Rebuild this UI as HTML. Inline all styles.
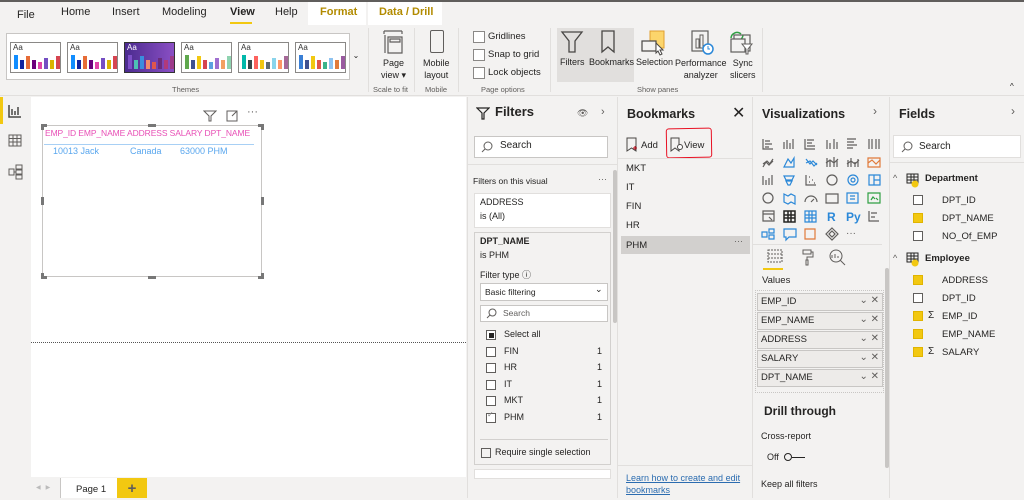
<!DOCTYPE html>
<html><head><meta charset="utf-8">
<style>
*{box-sizing:border-box;margin:0;padding:0}
body{width:1024px;height:498px;overflow:hidden;background:#f3f2f1;font-family:"Segoe UI","Liberation Sans",sans-serif;font-size:10px;color:#252423;position:relative}
.a{position:absolute}
.t{position:absolute;white-space:nowrap}
.cb{position:absolute;width:10px;height:10px;border:1px solid #605e5c;background:#fff}
.cby{position:absolute;width:10px;height:10px;background:#f2c811;border:1px solid #e0b400}
.th{position:absolute;top:42px;width:51px;height:31px;border:1px solid #8a8886;background:#fff}
.th span{position:absolute;left:2px;top:0;font-size:8px;color:#333}
.bars{position:absolute;left:3px;bottom:3px;display:flex;align-items:flex-end;gap:2px}
.bars i{display:block;width:4px}
.well{position:absolute;left:757px;width:126px;height:18px;background:#edebe9;border:1px solid #c8c6c4;font-size:9.5px;padding:2px 0 0 3px}
.well b{position:absolute;right:3px;top:1px;font-weight:normal;color:#605e5c;font-size:10px}
</style></head><body>

<div class="a" style="left:0;top:0;width:1024px;height:2px;background:#605e5c"></div>
<div class="a" style="left:308px;top:2px;width:58px;height:23px;background:#fff"></div>
<div class="a" style="left:368px;top:2px;width:74px;height:23px;background:#fff"></div>
<div class="t" style="left:17px;top:9px;font-size:11px">File</div>
<div class="t" style="left:61px;top:6px;font-size:11px">Home</div>
<div class="t" style="left:112px;top:6px;font-size:11px">Insert</div>
<div class="t" style="left:162px;top:6px;font-size:11px">Modeling</div>
<div class="t" style="left:230px;top:6px;font-size:11px;font-weight:bold">View</div>
<div class="a" style="left:230px;top:22px;width:22px;height:2px;background:#f2c811"></div>
<div class="t" style="left:275px;top:6px;font-size:11px">Help</div>
<div class="t" style="left:320px;top:6px;font-size:11px;color:#b28b00;font-weight:bold">Format</div>
<div class="t" style="left:379px;top:6px;font-size:11px;color:#b28b00;font-weight:bold">Data / Drill</div>

<div class="a" style="left:6px;top:33px;width:356px;height:47px;border:1px solid #c8c6c4;background:#fff"></div>
<div class="a" style="left:349px;top:33px;width:13px;height:47px;border-left:1px solid #c8c6c4;background:#f3f2f1;font-size:8px;text-align:center;padding-top:18px">⌄</div>
<div class="th" style="left:10px"><span>Aa</span><div class="bars"><i style="height:14px;background:#118dff"></i><i style="height:9px;background:#12239e"></i><i style="height:13px;background:#e66c37"></i><i style="height:9px;background:#6b007b"></i><i style="height:7px;background:#e044a7"></i><i style="height:11px;background:#744ec2"></i><i style="height:9px;background:#d9b300"></i><i style="height:13px;background:#d64550"></i></div></div>
<div class="th" style="left:67px"><span>Aa</span><div class="bars"><i style="height:14px;background:#118dff"></i><i style="height:9px;background:#12239e"></i><i style="height:13px;background:#e66c37"></i><i style="height:9px;background:#6b007b"></i><i style="height:7px;background:#e044a7"></i><i style="height:11px;background:#744ec2"></i><i style="height:9px;background:#d9b300"></i><i style="height:13px;background:#d64550"></i></div></div>
<div class="th" style="left:124px;background:linear-gradient(90deg,#4b2b8f,#8a4fc4);border-color:#333"><span style="color:#fff">Aa</span><div class="bars"><i style="height:14px;background:#7d4fc8"></i><i style="height:9px;background:#4ec1b5"></i><i style="height:13px;background:#3a8dde"></i><i style="height:9px;background:#f08a6c"></i><i style="height:7px;background:#e0564b"></i><i style="height:11px;background:#6b2b7b"></i><i style="height:9px;background:#b13a7b"></i><i style="height:13px;background:#9c3a8a"></i></div></div>
<div class="th" style="left:181px"><span>Aa</span><div class="bars"><i style="height:14px;background:#5fa84d"></i><i style="height:9px;background:#3f5190"></i><i style="height:13px;background:#f2c811"></i><i style="height:9px;background:#d64550"></i><i style="height:7px;background:#5da2e0"></i><i style="height:11px;background:#a06fd0"></i><i style="height:9px;background:#f2a060"></i><i style="height:13px;background:#8fd3b0"></i></div></div>
<div class="th" style="left:238px"><span>Aa</span><div class="bars"><i style="height:14px;background:#01b8aa"></i><i style="height:9px;background:#374649"></i><i style="height:13px;background:#fd625e"></i><i style="height:9px;background:#f2c80f"></i><i style="height:7px;background:#5f6b6d"></i><i style="height:11px;background:#8ad4eb"></i><i style="height:9px;background:#fe9666"></i><i style="height:13px;background:#a66999"></i></div></div>
<div class="th" style="left:295px"><span>Aa</span><div class="bars"><i style="height:14px;background:#3a7fd5"></i><i style="height:9px;background:#3f5190"></i><i style="height:13px;background:#f2c811"></i><i style="height:9px;background:#e0564b"></i><i style="height:7px;background:#3bb38a"></i><i style="height:11px;background:#8fc3f0"></i><i style="height:9px;background:#e07a3a"></i><i style="height:13px;background:#9a5aa0"></i></div></div>
<div class="t" style="left:172px;top:85px;font-size:7.5px;color:#605e5c">Themes</div>
<div class="a" style="left:368px;top:28px;width:1px;height:64px;background:#e1dfdd"></div>
<svg class="a" style="left:381px;top:29px" width="24" height="26"><path d="M3 2h18M3 2v3M21 2v3M4 6v18M7 8h14v16H7z M9 10h10v3H9z" fill="none" stroke="#605e5c" stroke-width="1.2"/></svg>
<div class="t" style="left:381px;top:57px;text-align:center;font-size:9px;line-height:12px">Page<br>view ▾</div>
<div class="t" style="left:373px;top:85px;font-size:7.5px;color:#605e5c">Scale to fit</div>
<div class="a" style="left:414px;top:28px;width:1px;height:64px;background:#e1dfdd"></div>
<div class="a" style="left:430px;top:30px;width:14px;height:23px;border:1.3px solid #605e5c;border-radius:2px"></div>
<div class="t" style="left:423px;top:57px;text-align:center;font-size:9px;line-height:12px">Mobile<br>layout</div>
<div class="t" style="left:425px;top:85px;font-size:7.5px;color:#605e5c">Mobile</div>
<div class="a" style="left:458px;top:28px;width:1px;height:64px;background:#e1dfdd"></div>
<div class="cb" style="left:473px;top:31px;width:12px;height:12px;border-color:#8a8886"></div><div class="t" style="left:488px;top:31px;font-size:9.5px">Gridlines</div>
<div class="cb" style="left:473px;top:49px;width:12px;height:12px;border-color:#8a8886"></div><div class="t" style="left:488px;top:49px;font-size:9.5px">Snap to grid</div>
<div class="cb" style="left:473px;top:67px;width:12px;height:12px;border-color:#8a8886"></div><div class="t" style="left:488px;top:67px;font-size:9.5px">Lock objects</div>
<div class="t" style="left:481px;top:85px;font-size:7.5px;color:#605e5c">Page options</div>
<div class="a" style="left:550px;top:28px;width:1px;height:64px;background:#e1dfdd"></div>
<div class="a" style="left:557px;top:28px;width:77px;height:54px;background:#e1dfdd"></div>
<svg class="a" style="left:560px;top:30px" width="24" height="24"><path d="M2 2h20l-7 9v11h-6V11z" fill="none" stroke="#484644" stroke-width="1.3"/></svg>
<svg class="a" style="left:600px;top:30px" width="16" height="24"><path d="M2 1h12v21l-6-5-6 5z" fill="none" stroke="#484644" stroke-width="1.3"/></svg>
<div class="t" style="left:560px;top:57px;font-size:9px">Filters</div>
<div class="t" style="left:589px;top:57px;font-size:9px">Bookmarks</div>
<svg class="a" style="left:640px;top:30px" width="28" height="26"><rect x="10" y="1" width="14" height="17" fill="#fcd56b" stroke="#e0a030"/><rect x="2" y="11" width="14" height="10" fill="#f3f2f1" stroke="#484644" stroke-width="1.2"/><path d="M16 13l7 7-3 0 2 4-2 1-2-4-2 2z" fill="#fff" stroke="#484644"/></svg>
<div class="t" style="left:636px;top:57px;font-size:9px">Selection</div>
<svg class="a" style="left:690px;top:30px" width="26" height="26"><rect x="2" y="1" width="16" height="20" fill="none" stroke="#605e5c" stroke-width="1.2"/><rect x="6" y="9" width="3" height="9" fill="none" stroke="#605e5c"/><rect x="10" y="5" width="3" height="13" fill="none" stroke="#605e5c"/><circle cx="18" cy="19" r="5" fill="#fff" stroke="#2b88d8" stroke-width="1.5"/><path d="M18 16v3h2" stroke="#2b88d8" fill="none"/></svg>
<div class="t" style="left:675px;top:57px;text-align:center;font-size:9px;line-height:12px">Performance<br>analyzer</div>
<svg class="a" style="left:728px;top:29px" width="26" height="27"><path d="M3 9a6 6 0 0 1 10-4M15 6a6 6 0 0 1-10 4" fill="none" stroke="#2fa043" stroke-width="1.5"/><rect x="6" y="6" width="16" height="16" fill="none" stroke="#605e5c" stroke-width="1.2"/><rect x="3" y="10" width="14" height="13" fill="#f3f2f1" stroke="#605e5c" stroke-width="1.2"/><path d="M14 15h10l-4 5v5h-2v-5z" fill="#fff" stroke="#605e5c"/></svg>
<div class="t" style="left:730px;top:57px;text-align:center;font-size:9px;line-height:12px">Sync<br>slicers</div>
<div class="t" style="left:637px;top:85px;font-size:7.5px;color:#605e5c">Show panes</div>
<div class="a" style="left:762px;top:28px;width:1px;height:64px;background:#e1dfdd"></div>
<div class="t" style="left:1010px;top:82px;font-size:8px">^</div>
<div class="a" style="left:0;top:95px;width:1024px;height:1px;background:#e1dfdd"></div>

<div class="a" style="left:0;top:97px;width:3px;height:27px;background:#f2c811"></div>
<svg class="a" style="left:8px;top:104px" width="14" height="14"><path d="M1 1v12h12M4 11V5M7 11V7M10 11V3" stroke="#484644" stroke-width="1.5" fill="none"/></svg>
<svg class="a" style="left:8px;top:134px" width="14" height="13"><path d="M1 1h12v11H1zM1 4.5h12M1 8h12M5 1v11M9 1v11" stroke="#605e5c" fill="none"/></svg>
<svg class="a" style="left:8px;top:164px" width="15" height="16"><path d="M1 5h5v6H1zM8 1h6v4H8zM8 6h6v4H8zM8 11h6v4H8zM6 8h2" stroke="#605e5c" fill="none"/></svg>

<div class="a" style="left:31px;top:97px;width:435px;height:380px;background:#fff"></div>
<div class="a" style="left:31px;top:342px;width:435px;border-top:1px dotted #555"></div>
<svg class="a" style="left:203px;top:110px" width="14" height="12"><path d="M1 1h12l-5 5v5h-2V6z" fill="none" stroke="#605e5c"/></svg>
<svg class="a" style="left:226px;top:110px" width="12" height="12"><path d="M1 1h10v10H1zM6 6l5-5M8 1h3v3" fill="none" stroke="#605e5c"/></svg>
<div class="t" style="left:247px;top:106px;font-size:11px;color:#605e5c">···</div>
<div class="a" style="left:42px;top:125px;width:220px;height:152px;border:1px solid #c8c6c4"></div>
<div class="a" style="left:41px;top:124px;width:6px;height:3px;background:#777"></div><div class="a" style="left:41px;top:124px;width:3px;height:6px;background:#777"></div>
<div class="a" style="left:258px;top:124px;width:6px;height:3px;background:#777"></div><div class="a" style="left:261px;top:124px;width:3px;height:6px;background:#777"></div>
<div class="a" style="left:41px;top:276px;width:6px;height:3px;background:#777"></div><div class="a" style="left:41px;top:273px;width:3px;height:6px;background:#777"></div>
<div class="a" style="left:258px;top:276px;width:6px;height:3px;background:#777"></div><div class="a" style="left:261px;top:273px;width:3px;height:6px;background:#777"></div>
<div class="a" style="left:148px;top:124px;width:8px;height:3px;background:#777"></div><div class="a" style="left:148px;top:276px;width:8px;height:3px;background:#777"></div>
<div class="a" style="left:41px;top:197px;width:3px;height:8px;background:#777"></div><div class="a" style="left:261px;top:197px;width:3px;height:8px;background:#777"></div>
<div class="t" style="left:45px;top:128px;font-size:8.5px;letter-spacing:-0.1px;color:#e84fb6">EMP_ID EMP_NAME ADDRESS SALARY DPT_NAME</div>
<div class="a" style="left:44px;top:144px;width:210px;height:1px;background:#a8d0f5"></div>
<div class="t" style="left:53px;top:146px;font-size:9px;color:#5aa7ee">10013 Jack</div>
<div class="t" style="left:130px;top:146px;font-size:9px;color:#5aa7ee">Canada</div>
<div class="t" style="left:180px;top:146px;font-size:9px;color:#5aa7ee">63000 PHM</div>

<div class="a" style="left:31px;top:477px;width:435px;height:21px;background:#f3f2f1"></div>
<div class="t" style="left:36px;top:484px;font-size:6px;color:#bbb">◀ &nbsp; ▶</div>
<div class="a" style="left:60px;top:478px;width:1px;height:20px;background:#c8c6c4"></div>
<div class="a" style="left:61px;top:478px;width:56px;height:20px;background:#fff"></div>
<div class="t" style="left:76px;top:484px;font-size:9.5px">Page 1</div>
<div class="a" style="left:117px;top:478px;width:30px;height:20px;background:#f2c811;font-size:15px;font-weight:bold;color:#605e5c;text-align:center;line-height:22px">+</div>

<div class="a" style="left:467px;top:97px;width:1px;height:401px;background:#e1dfdd"></div>
<svg class="a" style="left:476px;top:107px" width="14" height="13"><path d="M1 1h12l-5 5v6h-2V6z" fill="none" stroke="#252423" stroke-width="1.2"/></svg>
<div class="t" style="left:495px;top:104px;font-size:13px;font-weight:bold">Filters</div>
<div class="t" style="left:577px;top:108px;font-size:9px;color:#605e5c">👁</div>
<div class="t" style="left:601px;top:106px;font-size:11px;color:#605e5c">›</div>
<div class="a" style="left:474px;top:136px;width:134px;height:22px;background:#fff;border:1px solid #c8c6c4"></div>
<svg class="a" style="left:481px;top:141px" width="12" height="12"><circle cx="7" cy="5" r="4" fill="none" stroke="#605e5c"/><path d="M4 8l-3 3" stroke="#605e5c"/></svg>
<div class="t" style="left:500px;top:140px;font-size:10px">Search</div>
<div class="a" style="left:467px;top:164px;width:150px;height:1px;background:#e1dfdd"></div>
<div class="t" style="left:473px;top:176px;font-size:8.5px">Filters on this visual</div>
<div class="t" style="left:598px;top:174px;font-size:9px;color:#605e5c">···</div>
<div class="a" style="left:474px;top:193px;width:137px;height:35px;background:#fff;border:1px solid #e1dfdd"></div>
<div class="t" style="left:480px;top:197px;font-size:9px">ADDRESS</div>
<div class="t" style="left:480px;top:211px;font-size:9px">is (All)</div>
<div class="a" style="left:474px;top:232px;width:137px;height:233px;background:#f3f2f1;border:1px solid #d2d0ce"></div>
<div class="t" style="left:480px;top:236px;font-size:9px;font-weight:bold">DPT_NAME</div>
<div class="t" style="left:480px;top:250px;font-size:9px">is PHM</div>
<div class="t" style="left:480px;top:268px;font-size:9px">Filter type ⓘ</div>
<div class="a" style="left:480px;top:283px;width:128px;height:18px;background:#fff;border:1px solid #c8c6c4"></div>
<div class="t" style="left:485px;top:287px;font-size:8.5px">Basic filtering</div>
<div class="t" style="left:595px;top:284px;font-size:9px">⌄</div>
<div class="a" style="left:480px;top:305px;width:128px;height:17px;background:#fff;border:1px solid #c8c6c4"></div>
<svg class="a" style="left:486px;top:308px" width="11" height="11"><circle cx="6.5" cy="4.5" r="3.5" fill="none" stroke="#605e5c"/><path d="M4 7l-3 3" stroke="#605e5c"/></svg>
<div class="t" style="left:503px;top:308px;font-size:8.5px;color:#605e5c">Search</div>
<div class="cb" style="left:486px;top:330px;background:#fff"></div><div class="a" style="left:488.5px;top:332.5px;width:5px;height:5px;background:#252423"></div>
<div class="t" style="left:504px;top:329px;font-size:9px">Select all</div>
<div class="cb" style="left:486px;top:347px"></div><div class="t" style="left:504px;top:346px;font-size:9px">FIN</div><div class="t" style="left:597px;top:346px;font-size:9px">1</div>
<div class="cb" style="left:486px;top:363px"></div><div class="t" style="left:504px;top:362px;font-size:9px">HR</div><div class="t" style="left:597px;top:362px;font-size:9px">1</div>
<div class="cb" style="left:486px;top:380px"></div><div class="t" style="left:504px;top:379px;font-size:9px">IT</div><div class="t" style="left:597px;top:379px;font-size:9px">1</div>
<div class="cb" style="left:486px;top:396px"></div><div class="t" style="left:504px;top:395px;font-size:9px">MKT</div><div class="t" style="left:597px;top:395px;font-size:9px">1</div>
<div class="cb" style="left:486px;top:413px"></div><div class="t" style="left:487px;top:410px;font-size:8px;color:#888">✓</div><div class="t" style="left:504px;top:412px;font-size:9px">PHM</div><div class="t" style="left:597px;top:412px;font-size:9px">1</div>
<div class="a" style="left:480px;top:439px;width:128px;height:1px;background:#d2d0ce"></div>
<div class="cb" style="left:481px;top:448px;background:transparent"></div>
<div class="t" style="left:495px;top:447px;font-size:9px">Require single selection</div>
<div class="a" style="left:474px;top:469px;width:137px;height:10px;background:#fff;border:1px solid #e1dfdd"></div>
<div class="a" style="left:613px;top:170px;width:4px;height:153px;background:#c8c6c4;border-radius:2px"></div>

<div class="a" style="left:617px;top:97px;width:1px;height:401px;background:#e1dfdd"></div>
<div class="t" style="left:627px;top:107px;font-size:12.5px;font-weight:bold">Bookmarks</div>
<div class="t" style="left:732px;top:103px;font-size:16px;color:#252423">✕</div>
<svg class="a" style="left:626px;top:137px" width="12" height="16"><path d="M1 1h9v13l-4.5-3L1 14z" fill="none" stroke="#484644"/><path d="M7 11h4M9 9v4" stroke="#c50f1f"/></svg>
<div class="t" style="left:641px;top:140px;font-size:9.5px">Add</div>
<svg class="a" style="left:670px;top:137px" width="14" height="16"><path d="M1 1h8v13l-4-3-4 3z" fill="none" stroke="#484644"/><circle cx="10" cy="10" r="2.5" fill="#fff" stroke="#484644"/></svg>
<div class="t" style="left:684px;top:140px;font-size:9.5px">View</div>
<div class="a" style="left:666px;top:128px;width:46px;height:30px;border:1.5px solid #e81123;border-radius:3px;transform:rotate(-1deg)"></div>
<div class="a" style="left:617px;top:158px;width:135px;height:1px;background:#e1dfdd"></div>
<div class="t" style="left:626px;top:163px;font-size:9.5px">MKT</div>
<div class="t" style="left:626px;top:182px;font-size:9.5px">IT</div>
<div class="t" style="left:626px;top:201px;font-size:9.5px">FIN</div>
<div class="t" style="left:626px;top:220px;font-size:9.5px">HR</div>
<div class="a" style="left:621px;top:236px;width:129px;height:18px;background:#d2d0ce"></div>
<div class="t" style="left:626px;top:240px;font-size:9.5px">PHM</div>
<div class="t" style="left:734px;top:236px;font-size:9px;color:#605e5c">···</div>
<div class="a" style="left:617px;top:465px;width:135px;height:1px;background:#e1dfdd"></div>
<div class="t" style="left:626px;top:472px;font-size:9px;color:#2b6cb0;text-decoration:underline;line-height:12px">Learn how to create and edit<br>bookmarks</div>

<div class="a" style="left:752px;top:97px;width:1px;height:401px;background:#e1dfdd"></div>
<div class="t" style="left:762px;top:107px;font-size:12.5px;font-weight:bold">Visualizations</div>
<div class="t" style="left:873px;top:104px;font-size:12px;color:#605e5c">›</div>
<svg class="a" style="left:760px;top:136px" width="128" height="108" fill="none" stroke="#605e5c" stroke-width="1.2">
<g><path d="M3 3v10h10M5 5h5M5 8h7M5 11h4"/><path d="M24 13V6M27 13V4M30 13V7M33 13V3"/><path d="M45 3v10h10M47 4h7M47 7h5M47 10h8"/><path d="M67 13V4M70 13V7M74 13V3M77 13V6"/><path d="M87 3h9M87 6h7M87 9h10M87 12h6"/><path d="M109 13V3M112 13V3M116 13V3M119 13V3"/></g>
<g transform="translate(0,18)"><path d="M3 13l3-5 3 3 4-6M3 10l4-3 3 3 3-3"/><path d="M24 13l4-8 3 4 3-5v9z" stroke="#2b88d8"/><path d="M46 5l4 5 3-3 4 4M46 9l4-2 4 5 3-3" stroke="#2b88d8"/><path d="M67 13V4M70 13V7M74 13V3M77 13V6M66 9l4-3 4 3 4-4"/><path d="M88 13V6M91 13V4M95 13V8M98 13V5M87 10l4-3 4 3 4-4"/><path d="M108 13V4h12v9zM108 9l4-3 4 4 4-4" stroke="#e07a3a"/></g>
<g transform="translate(0,36)"><path d="M3 13V4M6 13V8M9 13V6M12 13V3"/><path d="M24 4h10l-2 4h-6zM26 9h6l-2 4h-2z" stroke="#2b88d8"/><path d="M46 3v10h10M49 5h1M52 8h1M49 10h1M54 11h1"/><circle cx="72" cy="8" r="5"/><circle cx="93" cy="8" r="5" stroke="#2b88d8"/><circle cx="93" cy="8" r="2" stroke="#2b88d8"/><path d="M109 3h11v10h-11zM114 3v10M114 8h6" stroke="#2b88d8"/></g>
<g transform="translate(0,54)"><circle cx="8" cy="8" r="5"/><path d="M24 4l4 2 3-2 4 2v8l-4-2-3 2-4-2z" stroke="#2b88d8"/><path d="M45 12a6 6 0 0 1 12 0M51 12l3-3"/><path d="M66 4h12v9H66z"/><path d="M87 3h11v10H87zM90 6h5M90 9h5" stroke="#2b88d8"/><path d="M108 3h12v10h-12zM111 10l2-3 2 2M116 8l2 2" stroke="#2fa043"/></g>
<g transform="translate(0,72)"><path d="M3 3h11v10H3zM3 6h11M9 9l3 3"/><path d="M24 3h11v11H24zM24 7h11M24 10h11M28 3v11M31 3v11" stroke="#252423" stroke-width="1.5"/><path d="M45 3h11v11H45zM45 7h11M45 10h11M49 3v11M52 3v11" stroke="#2b88d8"/><text x="67" y="13" font-family="Liberation Sans" font-size="12" font-weight="bold" fill="#2b88d8" stroke="none">R</text><text x="86" y="13" font-family="Liberation Sans" font-size="12" font-weight="bold" fill="#2b88d8" stroke="none">Py</text><path d="M109 3v10h10M111 5h6M111 9h4"/></g>
<g transform="translate(0,90)"><path d="M2 6h5v5H2zM9 3h5v4H9zM9 9h5v4H9z" stroke="#2b88d8"/><path d="M24 3h12v8h-7l-3 3v-3h-2z" stroke="#2b88d8"/><path d="M45 3h10v10H45z" stroke="#e07a3a"/><path d="M72 2l6 6-6 6-6-6zM72 5l3 3-3 3-3-3z"/><text x="86" y="10" font-family="Liberation Sans" font-size="10" fill="#605e5c" stroke="none">···</text></g>
</svg>
<div class="a" style="left:753px;top:244px;width:129px;height:1px;background:#e1dfdd"></div>
<svg class="a" style="left:767px;top:248px" width="80" height="18" fill="none" stroke="#605e5c"><path d="M1 2h14v12H1zM1 6h14M1 10h14" stroke-dasharray="2 1"/><path d="M36 2h8v4h-8zM44 4h2v5h-6v3M39 12h2v5h-2z"/><circle cx="69" cy="8" r="6"/><path d="M73 12l5 5M65 10v-3M68 10V6M71 10V8"/></svg>
<div class="a" style="left:763px;top:268px;width:20px;height:2px;background:#f2c811"></div>
<div class="t" style="left:762px;top:275px;font-size:9.5px">Values</div>
<div class="a" style="left:755px;top:290px;width:129px;height:103px;border:1px dotted #c8c6c4"></div>
<div class="well" style="top:293px">EMP_ID<b>⌄ ✕</b></div>
<div class="well" style="top:312px">EMP_NAME<b>⌄ ✕</b></div>
<div class="well" style="top:331px">ADDRESS<b>⌄ ✕</b></div>
<div class="well" style="top:350px">SALARY<b>⌄ ✕</b></div>
<div class="well" style="top:369px">DPT_NAME<b>⌄ ✕</b></div>
<div class="t" style="left:764px;top:404px;font-size:12px;font-weight:bold">Drill through</div>
<div class="t" style="left:761px;top:431px;font-size:9px">Cross-report</div>
<div class="t" style="left:767px;top:452px;font-size:9px">Off</div>
<div class="a" style="left:784px;top:453px;width:8px;height:8px;border:1.3px solid #252423;border-radius:50%"></div>
<div class="a" style="left:792px;top:457px;width:13px;height:1.3px;background:#252423"></div>
<div class="t" style="left:761px;top:479px;font-size:9px">Keep all filters</div>
<div class="a" style="left:885px;top:268px;width:4px;height:200px;background:#c8c6c4;border-radius:2px"></div>

<div class="a" style="left:889px;top:97px;width:1px;height:401px;background:#e1dfdd"></div>
<div class="t" style="left:899px;top:107px;font-size:12.5px;font-weight:bold">Fields</div>
<div class="t" style="left:1011px;top:104px;font-size:12px;color:#605e5c">›</div>
<div class="a" style="left:893px;top:135px;width:128px;height:23px;background:#fff;border:1px solid #e1dfdd"></div>
<svg class="a" style="left:901px;top:141px" width="12" height="12"><circle cx="7" cy="5" r="4" fill="none" stroke="#605e5c"/><path d="M4 8l-3 3" stroke="#605e5c"/></svg>
<div class="t" style="left:919px;top:141px;font-size:10px">Search</div>
<div class="a" style="left:889px;top:162px;width:135px;height:1px;background:#e1dfdd"></div>
<div class="t" style="left:893px;top:173px;font-size:9px;color:#605e5c">^</div>
<svg class="a" style="left:906px;top:173px" width="14" height="16"><path d="M1 1h11v9H1zM1 4h11M1 7h11M5 1v9M8 1v9" fill="none" stroke="#252423"/><circle cx="9" cy="11" r="3.5" fill="#f2c811"/></svg>
<div class="t" style="left:925px;top:173px;font-size:9.5px;font-weight:bold">Department</div>
<div class="cb" style="left:913px;top:195px"></div><div class="t" style="left:942px;top:195px;font-size:9.5px">DPT_ID</div>
<div class="cby" style="left:913px;top:213px"></div><div class="t" style="left:942px;top:213px;font-size:9.5px">DPT_NAME</div>
<div class="cb" style="left:913px;top:231px"></div><div class="t" style="left:942px;top:231px;font-size:9.5px">NO_Of_EMP</div>
<div class="t" style="left:893px;top:253px;font-size:9px;color:#605e5c">^</div>
<svg class="a" style="left:906px;top:252px" width="14" height="16"><path d="M1 1h11v9H1zM1 4h11M1 7h11M5 1v9M8 1v9" fill="none" stroke="#252423"/><circle cx="9" cy="11" r="3.5" fill="#f2c811"/></svg>
<div class="t" style="left:925px;top:253px;font-size:9.5px;font-weight:bold">Employee</div>
<div class="cby" style="left:913px;top:275px"></div><div class="t" style="left:942px;top:275px;font-size:9.5px">ADDRESS</div>
<div class="cb" style="left:913px;top:293px"></div><div class="t" style="left:942px;top:293px;font-size:9.5px">DPT_ID</div>
<div class="cby" style="left:913px;top:311px"></div><div class="t" style="left:928px;top:310px;font-size:10px">Σ</div><div class="t" style="left:942px;top:311px;font-size:9.5px">EMP_ID</div>
<div class="cby" style="left:913px;top:329px"></div><div class="t" style="left:942px;top:329px;font-size:9.5px">EMP_NAME</div>
<div class="cby" style="left:913px;top:347px"></div><div class="t" style="left:928px;top:346px;font-size:10px">Σ</div><div class="t" style="left:942px;top:347px;font-size:9.5px">SALARY</div>
</body></html>
